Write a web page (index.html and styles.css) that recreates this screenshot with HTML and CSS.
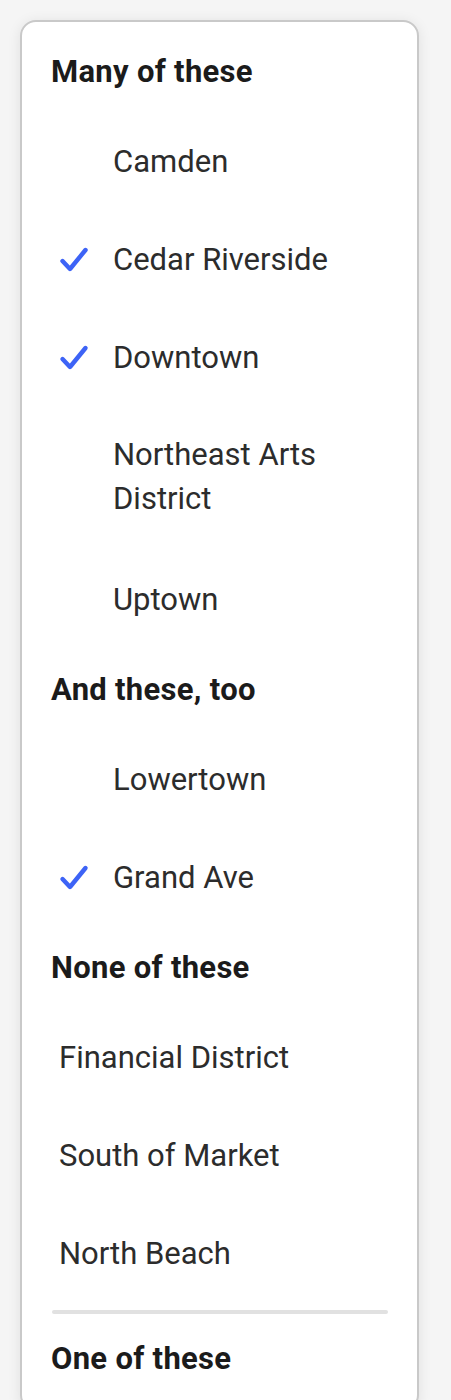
FILE: index.html
```html
<!DOCTYPE html>
<html lang="en">
<head>
<meta charset="utf-8">
<title>Menu</title>
<link rel="stylesheet" href="styles.css">
</head>
<body>
<div class="menu" role="menu">
  <div class="section">
    <div class="heading">Many of these</div>
    <div class="item selectable"><span class="check"></span><span class="label">Camden</span></div>
    <div class="item selectable selected"><span class="check"><svg viewBox="0 0 32 32"><path d="M4.5 17 L12 25 L27.5 6"/></svg></span><span class="label">Cedar Riverside</span></div>
    <div class="item selectable selected"><span class="check"><svg viewBox="0 0 32 32"><path d="M4.5 17 L12 25 L27.5 6"/></svg></span><span class="label">Downtown</span></div>
    <div class="item selectable wrap"><span class="check"></span><span class="label">Northeast Arts District</span></div>
    <div class="item selectable"><span class="check"></span><span class="label">Uptown</span></div>
  </div>
  <div class="section">
    <div class="heading">And these, too</div>
    <div class="item selectable"><span class="check"></span><span class="label">Lowertown</span></div>
    <div class="item selectable selected"><span class="check"><svg viewBox="0 0 32 32"><path d="M4.5 17 L12 25 L27.5 6"/></svg></span><span class="label">Grand Ave</span></div>
  </div>
  <div class="section">
    <div class="heading">None of these</div>
    <div class="item"><span class="label">Financial District</span></div>
    <div class="item"><span class="label">South of Market</span></div>
    <div class="item"><span class="label">North Beach</span></div>
  </div>
  <div class="divider"></div>
  <div class="section">
    <div class="heading">One of these</div>
  </div>
</div>
</body>
</html>
```
FILE: styles.css
```css
html, body {
  margin: 0;
  padding: 0;
  background: #f5f5f5;
}
body {
  padding: 20px 0 0 20px;
  font-family: Roboto, "Open Sans", sans-serif;
  font-size: 31px;
}
.menu {
  box-sizing: border-box;
  width: 399px;
  background: #ffffff;
  border: 2px solid #c9c9c9;
  border-radius: 16px;
  box-shadow: 0 2px 14px rgba(0, 0, 0, 0.09);
  padding: 9px 0 9px 0;
  display: flex;
  flex-direction: column;
}
.section {
  display: flex;
  flex-direction: column;
}
.heading {
  padding: 19px 28px 19px 29px;
  line-height: 44px;
  font-weight: 700;
  letter-spacing: 0.3px;
  color: #1b1b1b;
}
.item {
  display: flex;
  align-items: center;
  padding: 27px 30px 27.5px 36px;
  line-height: 43.5px;
  color: #2c2c2c;
}
.item.wrap {
  padding-top: 26px;
  padding-bottom: 31px;
}
.check {
  flex: 0 0 32px;
  width: 32px;
  height: 32px;
  margin-right: 23px;
}
.check svg {
  display: block;
  width: 32px;
  height: 32px;
  fill: none;
  stroke: #3d63f6;
  stroke-width: 4.4;
  stroke-linecap: round;
  stroke-linejoin: round;
}
.item:not(.selectable) .label {
  padding-left: 1px;
}
.divider {
  height: 4px;
  border-radius: 2px;
  background: #e1e1e1;
  margin: 7px 29px 4px 30px;
}
```
